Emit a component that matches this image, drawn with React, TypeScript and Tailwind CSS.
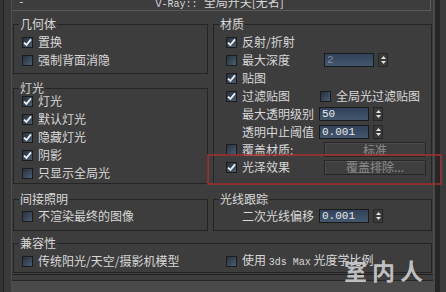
import React from 'react';

const cjk = "font-['Noto_Sans_CJK_SC','Liberation_Sans',sans-serif]";
const mono = "font-['Liberation_Mono','Noto_Sans_CJK_SC',monospace]";

function Check({ on }: { on?: boolean }) {
  return (
    <span className="flex h-[11px] w-[11px] shrink-0 items-center justify-center border border-[#1c1c1c] bg-linear-to-br from-[#26313d] to-[#4a5e74]">
      {on && (
        <svg width="9" height="9" viewBox="0 0 9 9">
          <path d="M1 4.6 L3.4 7 L8 1.4" fill="none" stroke="#eef3f8" strokeWidth="1.8" />
        </svg>
      )}
    </span>
  );
}

function Spinner() {
  return (
    <span className="ml-[4px] flex h-[14px] w-[10px] flex-col items-center justify-center gap-[2px] border border-[#262626] bg-[#3a3a3a]">
      <svg width="5" height="3" viewBox="0 0 5 3">
        <path d="M0 3 L2.5 0 L5 3Z" fill="#e4e4e4" />
      </svg>
      <svg width="5" height="3" viewBox="0 0 5 3">
        <path d="M0 0 L2.5 3 L5 0Z" fill="#e4e4e4" />
      </svg>
    </span>
  );
}

function NumField({ value, dim }: { value: string; dim?: boolean }) {
  return (
    <div className="flex items-center">
      <span
        className={`flex h-[14px] w-[50px] items-center border border-[#1a1a1a] bg-linear-to-b from-[#31425a] to-[#43576d] pl-[2px] ${mono} text-[11px] ${
          dim ? 'text-[#7d8c9c]' : 'text-[#e8e8e8]'
        }`}
      >
        {value}
      </span>
      <Spinner />
    </div>
  );
}

function Row({ on, label }: { on?: boolean; label: React.ReactNode }) {
  return (
    <div className="flex h-[18px] items-center gap-[5px]">
      <Check on={on} />
      <span className="whitespace-nowrap leading-[12px]">{label}</span>
    </div>
  );
}

function Btn({ label }: { label: string }) {
  return (
    <span className="flex h-[15px] w-[102px] items-center justify-center border border-[#262626] bg-[#3f3f3f] leading-[12px] text-[#8c8c8c] shadow-[inset_1px_1px_0_#4c4c4c]">
      {label}
    </span>
  );
}

function Group({
  title,
  className = '',
  children,
}: {
  title: string;
  className?: string;
  children: React.ReactNode;
}) {
  return (
    <fieldset className={`border border-[#242424] ${className}`}>
      <legend className="ml-[5px] px-[1px] leading-[12px]">{title}</legend>
      {children}
    </fieldset>
  );
}

export default function App() {
  return (
    <div className={`relative flex h-[292px] w-[446px] overflow-hidden bg-[#3d3d3d] text-[12px] text-[#d8d8d8] ${cjk}`}>
      {/* left edge */}
      <div className="flex w-[12px] shrink-0">
        <div className="w-[3px] bg-[#333]" />
        <div className="w-[1px] bg-[#222]" />
        <div className="flex-1 bg-[#3a3a3a]" />
        <div className="w-[1px] bg-[#4d4d4d]" />
      </div>

      <div className="flex w-[421px] shrink-0 flex-col">
        {/* rollout title */}
        <div className="mr-[2px] flex h-[11px] shrink-0 overflow-hidden border-r border-b border-[#5a5a5a] leading-[12px]">
          <span className={`-mt-[4px] ml-[6px] ${mono} text-[11px]`}>-</span>
          <span className="-mt-[4px] ml-[131px] whitespace-nowrap">
            <span className={`${mono} text-[10px]`}>V-Ray:: </span>全局开关[无名]
          </span>
        </div>

        <div className="grid grid-cols-[195px_219px] gap-x-[5px] pl-[1px]">
          {/* left column */}
          <div className="flex flex-col">
            <Group title="几何体" className="mt-[7px] pt-[3px] pb-[4px]">
              <div className="pl-[8px]">
                <Row on label="置换" />
                <Row label="强制背面消隐" />
              </div>
            </Group>
            <Group title="灯光" className="mt-[8px] pb-[1px]">
              <div className="-mt-[2px] pl-[8px]">
                <Row on label="灯光" />
                <Row on label="默认灯光" />
                <Row on label="隐藏灯光" />
                <Row on label="阴影" />
                <Row label="只显示全局光" />
              </div>
            </Group>
          </div>

          {/* right column */}
          <Group title="材质" className="mt-[7px] pt-[3px] pb-[7px]">
            <div className="pl-[12px]">
              <Row on label="反射/折射" />
              <div className="flex h-[18px] items-center gap-[5px] leading-[12px]">
                <Check />
                <span className="w-[77px]">最大深度</span>
                <NumField value="2" dim />
              </div>
              <Row on label="贴图" />
              <div className="flex h-[18px] items-center gap-[5px] leading-[12px]">
                <Check on />
                <span className="w-[73px]">过滤贴图</span>
                <Check />
                <span>全局光过滤贴图</span>
              </div>
              <div className="flex h-[18px] items-center pl-[16px] leading-[12px]">
                <span className="w-[77px]">最大透明级别</span>
                <NumField value="50" />
              </div>
              <div className="flex h-[18px] items-center pl-[16px] leading-[12px]">
                <span className="w-[77px]">透明中止阈值</span>
                <NumField value="0.001" />
              </div>
              <div className="flex h-[17px] items-center gap-[5px] leading-[12px]">
                <Check />
                <span className="w-[77px]">覆盖材质:</span>
                <Btn label="标准" />
              </div>
              <div className="flex h-[18px] items-center gap-[5px] leading-[12px]">
                <Check on />
                <span className="w-[77px]">光泽效果</span>
                <Btn label="覆盖排除..." />
              </div>
            </div>
          </Group>

          <Group title="间接照明" className="mt-[9px] pt-[2px] pb-[5px]">
            <div className="pl-[8px]">
              <Row label="不渲染最终的图像" />
            </div>
          </Group>
          <Group title="光线跟踪" className="mt-[9px] pt-[2px] pb-[5px]">
            <div className="flex h-[18px] items-center pl-[28px] leading-[12px]">
              <span className="w-[77px]">二次光线偏移</span>
              <NumField value="0.001" />
            </div>
          </Group>

          <Group title="兼容性" className="col-span-2 mt-[6px] pt-[3px] pb-[2px]">
            <div className="grid grid-cols-[199px_1fr]">
              <div className="pl-[8px]">
                <Row label="传统阳光/天空/摄影机模型" />
              </div>
              <div className="pl-[13px]">
                <Row
                  label={
                    <>
                      使用 <span className={`${mono} text-[10px]`}>3ds Max</span> 光度学比例
                    </>
                  }
                />
              </div>
            </div>
          </Group>
        </div>

        <div className="mt-[1px] h-[1px] bg-[#222]" />
        <div className="mt-[5px] h-[1px] bg-[#262626]" />
        <div className="flex-1 bg-[#4a4a4a]" />
      </div>

      {/* right edge */}
      <div className="flex flex-1">
        <div className="w-[2px] bg-[#484848]" />
        <div className="w-[5px] bg-[#262626]" />
        <div className="flex-1 bg-[#3b3b3b]" />
      </div>

      {/* annotation */}
      <div className="absolute top-[154px] left-[207px] h-[31px] w-[235px] border-2 border-[#a53232]/75" />

      {/* watermark */}
      <div className="absolute top-[253px] left-[344px] text-[23px] font-bold tracking-[5px] text-[#d2d2d2]/90">
        室内人
      </div>
    </div>
  );
}
